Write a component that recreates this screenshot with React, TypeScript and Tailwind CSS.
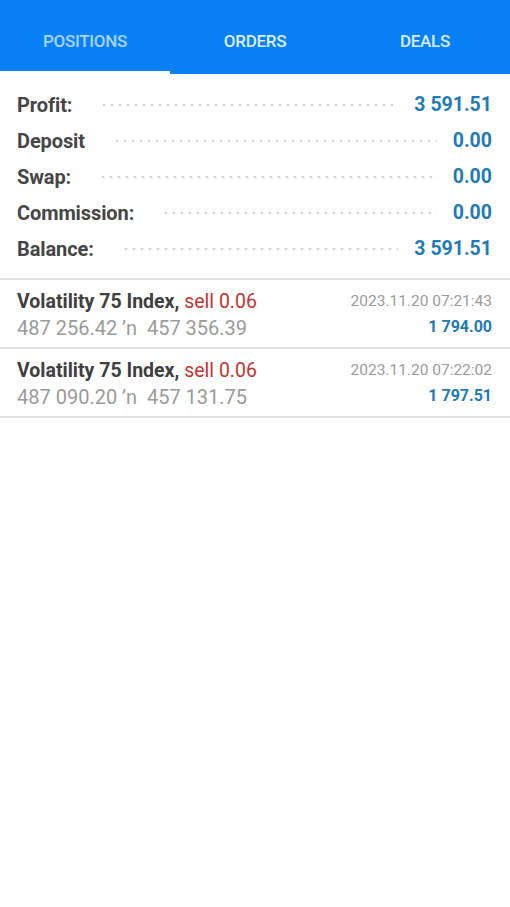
import React from 'react';

const summary = [
  { label: 'Profit:', value: '3 591.51' },
  { label: 'Deposit', value: '0.00' },
  { label: 'Swap:', value: '0.00' },
  { label: 'Commission:', value: '0.00' },
  { label: 'Balance:', value: '3 591.51' },
];

const positions = [
  { symbol: 'Volatility 75 Index,', side: 'sell 0.06', open: '487 256.42', current: '457 356.39', time: '2023.11.20 07:21:43', profit: '1 794.00' },
  { symbol: 'Volatility 75 Index,', side: 'sell 0.06', open: '487 090.20', current: '457 131.75', time: '2023.11.20 07:22:02', profit: '1 797.51' },
];

const tabs = ['POSITIONS', 'ORDERS', 'DEALS'];

const App: React.FC = () => {
  return (
    <div className="min-h-[907px] w-[510px] bg-white font-['Roboto',sans-serif]">
      {/* Tab bar */}
      <div className="flex h-[74px] bg-[#0a80f6]">
        {tabs.map((tab, i) => (
          <div key={tab} className="relative flex flex-1 items-center justify-center pt-[9px]">
            <span className={`text-[17px] font-medium tracking-[-0.3px] ${i === 0 ? 'text-[#a9d4fb]' : 'text-[#d9efff]'}`}>
              {tab}
            </span>
            {i === 0 && <div className="absolute bottom-0 left-0 h-[3px] w-full bg-white" />}
          </div>
        ))}
      </div>

      {/* Account summary */}
      <div className="pb-[11px] pl-[17px] pr-[18px] pt-[13px]">
        {summary.map(row => (
          <div key={row.label} className="flex h-[36px] items-center">
            <span className="text-[20px] font-bold tracking-[-0.1px] text-[#464646]">{row.label}</span>
            <div className="ml-7 mr-4 h-[4px] flex-1 bg-[radial-gradient(circle,#d4d4d4_1.1px,transparent_1.7px)] bg-[length:8px_4px] bg-repeat-x" />
            <span className="text-[19.5px] font-bold text-[#1f7ab8]">{row.value}</span>
          </div>
        ))}
      </div>

      {/* Open positions */}
      <div className="border-t-2 border-[#e2e2e2]">
        {positions.map((p, i) => (
          <div key={i} className="flex h-[69px] justify-between border-b-2 border-[#e2e2e2] pl-[17px] pr-[18px] pt-[9px]">
            <div className="flex flex-col leading-[26px]">
              <div className="text-[19.5px]">
                <span className="font-bold text-[#404040]">{p.symbol}</span>{' '}
                <span className="text-[#c5342f]">{p.side}</span>
              </div>
              <div className="text-[20px] text-[#9a9a9a]">
                {p.open} ’n&nbsp; {p.current}
              </div>
            </div>
            <div className="flex flex-col items-end leading-[25px]">
              <span className="text-[15.5px] text-[#9b9b9b]">{p.time}</span>
              <span className="text-[16px] font-bold text-[#1f7ab8]">{p.profit}</span>
            </div>
          </div>
        ))}
      </div>
    </div>
  );
};

export default App;
